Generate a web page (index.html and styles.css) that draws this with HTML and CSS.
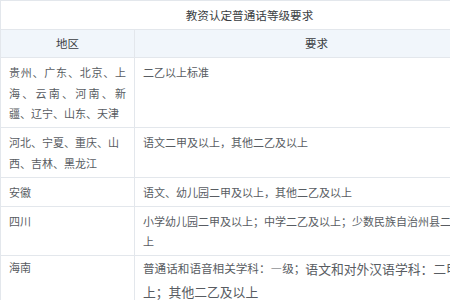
FILE: index.html
```html
<!DOCTYPE html>
<html lang="zh">
<head>
<meta charset="utf-8">
<link rel="stylesheet" href="styles.css">
</head>
<body>
<table class="req">
  <colgroup><col class="col-region"><col class="col-req"></colgroup>
  <tr class="title-row"><td colspan="2">教资认定普通话等级要求</td></tr>
  <tr class="head-row"><th>地区</th><th>要求</th></tr>
  <tr>
    <td>
      <span class="jl">贵州、广东、北京、上</span>
      <span class="jl">海、云南、河南、新</span>
      <span class="ll">疆、辽宁、山东、天津</span>
    </td>
    <td>二乙以上标准</td>
  </tr>
  <tr>
    <td>河北、宁夏、重庆、山西、吉林、黑龙江</td>
    <td>语文二甲及以上，其他二乙及以上</td>
  </tr>
  <tr>
    <td>安徽</td>
    <td>语文、幼儿园二甲及以上，其他二乙及以上</td>
  </tr>
  <tr>
    <td>四川</td>
    <td>小学幼儿园二甲及以上；中学二乙及以上；少数民族自治州县二乙及以上</td>
  </tr>
  <tr class="last-row">
    <td>海南</td>
    <td class="mixed"><span class="sm">普通话和语音相关学科：—级；</span><span class="lg">语文和对外汉语学科：二甲及以上；其他二乙及以上</span></td>
  </tr>
</table>
</body>
</html>
```
FILE: styles.css
```css
html, body {
  margin: 0;
  padding: 0;
  overflow: hidden;
  background: #ffffff;
}

body {
  font-family: "Noto Sans CJK SC", "Noto Sans", sans-serif;
  color: #585c62;
}

.req {
  width: 498px;
  border-collapse: collapse;
  table-layout: fixed;
  font-size: 11px;
  line-height: 20.5px;
}

.col-region {
  width: 134px;
}

.col-req {
  width: 364px;
}

.req td, .req th {
  border: 1px solid #e3e7ec;
  padding: 4px 8px 3.5px;
  vertical-align: top;
  text-align: left;
  font-weight: normal;
}

.title-row td {
  text-align: center;
  color: #3a3d42;
  font-size: 11.6px;
  height: 21px;
  line-height: 21px;
  padding: 4px 8px 3px;
}

.head-row th {
  background: #f1f6fb;
  text-align: center;
  color: #3a3d42;
  font-size: 11.5px;
  line-height: 21px;
  padding: 3px 8px 3px;
  vertical-align: middle;
}

.jl, .ll {
  display: block;
  text-align: justify;
}

.jl {
  text-align-last: justify;
}

.ll {
  text-align-last: left;
}

.last-row td {
  padding-top: 1px;
}

.mixed {
  line-height: 23px;
}

.sm {
  font-size: 11.6px;
  vertical-align: top;
}

.lg {
  font-size: 12.8px;
  vertical-align: top;
}
```
